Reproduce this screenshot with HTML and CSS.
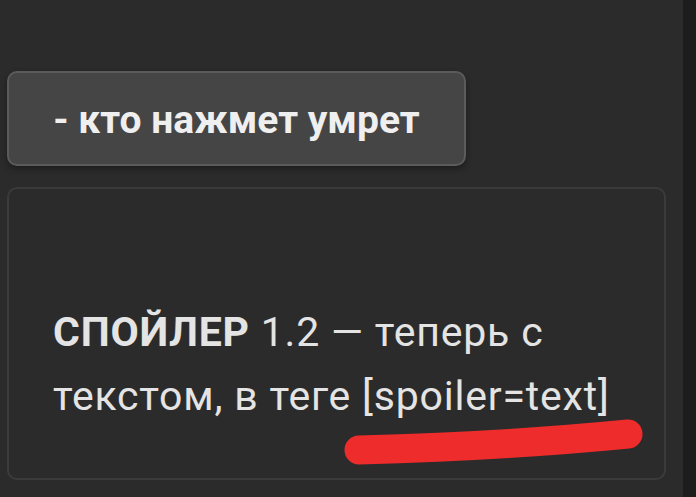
FILE: index.html
```html
<!DOCTYPE html>
<html>
    <head>
        <meta charset="utf-8">
        <title>spoiler</title>
        <link rel="stylesheet" href="styles.css">
    </head>
    <body>
        <div class="page">
            <div class="main">
                <button class="spoiler-btn">- кто нажмет умрет</button>
                <div class="card">
                    <p class="note"><b>СПОЙЛЕР</b> 1.2 — теперь с<br>текстом, в теге [spoiler=text]</p>
                    <!-- красная пометка поверх текста -->
                    <svg class="mark" viewBox="0 0 655 289" width="655" height="289">
                        <path d="M350 261 Q497 257 619 245" stroke="#ee2c2c" stroke-width="29" stroke-linecap="round" fill="none"/>
                    </svg>
                </div>
            </div>
            <div class="edge"></div>
        </div>
    </body>
</html>
```

FILE: styles.css
```css
*{
    margin: 0;
    padding: 0;
    box-sizing: border-box;
}
body{
    background: #2b2b2b;
    font-family: Roboto, "Liberation Sans", sans-serif;
}
.page{
    display: flex;
    height: 497px;
    overflow: hidden;
}
.main{
    flex: 1;
    padding: 71px 0 0 7px;
}
.edge{
    width: 13px;
    background: #1d1d1d;
}
.spoiler-btn{
    display: block;
    width: 459px;
    height: 95px;
    padding-top: 2px;
    background: #454545;
    border: 2px solid #5b5b5b;
    border-radius: 10px;
    color: #efefef;
    font-family: Roboto, "Liberation Sans", sans-serif;
    font-weight: bold;
    font-size: 39px;
    box-shadow: 0 3px 6px rgba(0,0,0,0.35);
}
.card{
    position: relative;
    width: 659px;
    height: 293px;
    margin-top: 21px;
    border: 2px solid #3b3b3b;
    border-radius: 10px;
    padding: 111px 0 0 44px;
}
.note{
    color: #e4e4e4;
    font-size: 41px;
    letter-spacing: 0.8px;
    line-height: 64px;
}
.mark{
    position: absolute;
    left: 0;
    top: 0;
    filter: blur(0.7px);
}
```
